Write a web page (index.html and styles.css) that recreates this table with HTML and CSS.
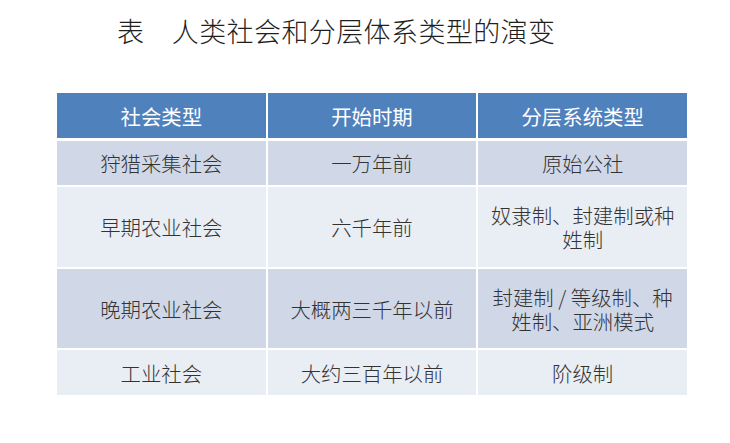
FILE: index.html
```html
<!DOCTYPE html>
<html lang="zh-CN">
<head>
<meta charset="utf-8">
<title>人类社会和分层体系类型的演变</title>
<link rel="stylesheet" href="styles.css">
</head>
<body>
<h1 class="title">表　人类社会和分层体系类型的演变</h1>
<div class="table">
  <div class="row head">
    <div class="cell">社会类型</div>
    <div class="cell">开始时期</div>
    <div class="cell">分层系统类型</div>
  </div>
  <div class="row odd r1">
    <div class="cell">狩猎采集社会</div>
    <div class="cell">一万年前</div>
    <div class="cell">原始公社</div>
  </div>
  <div class="row even r2">
    <div class="cell">早期农业社会</div>
    <div class="cell">六千年前</div>
    <div class="cell">奴隶制、封建制或种姓制</div>
  </div>
  <div class="row odd r3">
    <div class="cell">晚期农业社会</div>
    <div class="cell">大概两三千年以前</div>
    <div class="cell">封建制 / 等级制、种姓制、亚洲模式</div>
  </div>
  <div class="row even r4">
    <div class="cell">工业社会</div>
    <div class="cell">大约三百年以前</div>
    <div class="cell">阶级制</div>
  </div>
</div>
</body>
</html>
```
FILE: styles.css
```css
html, body {
  margin: 0;
  padding: 0;
  background: #ffffff;
}
body {
  width: 730px;
  height: 443px;
  overflow: hidden;
  font-family: "Noto Sans CJK SC", "Liberation Sans", sans-serif;
}
.title {
  margin: 15px 0 0 117px;
  font-size: 27px;
  line-height: 32px;
  letter-spacing: 0.4px;
  font-weight: 300;
  color: #1f1f1f;
  white-space: nowrap;
}
.table {
  margin: 46px 0 0 57px;
  width: 630px;
  display: flex;
  flex-direction: column;
  gap: 2px;
}
.row {
  display: grid;
  grid-template-columns: repeat(3, 1fr);
  column-gap: 2px;
}
.cell {
  display: flex;
  align-items: center;
  justify-content: center;
  text-align: center;
  padding: 0 11px;
  font-size: 20.4px;
  line-height: 24px;
  font-weight: 300;
  color: #333333;
}
.head {
  height: 45px;
  margin-bottom: 1px;
}
.head .cell {
  background: #4f81bd;
  color: #ffffff;
  font-weight: 400;
}
.odd .cell { background: #d0d8e8; }
.even .cell { background: #e9edf4; }
.r1 { height: 44px; }
.r2 { height: 80px; }
.r3 { height: 79px; }
.r4 { height: 45px; }
```
